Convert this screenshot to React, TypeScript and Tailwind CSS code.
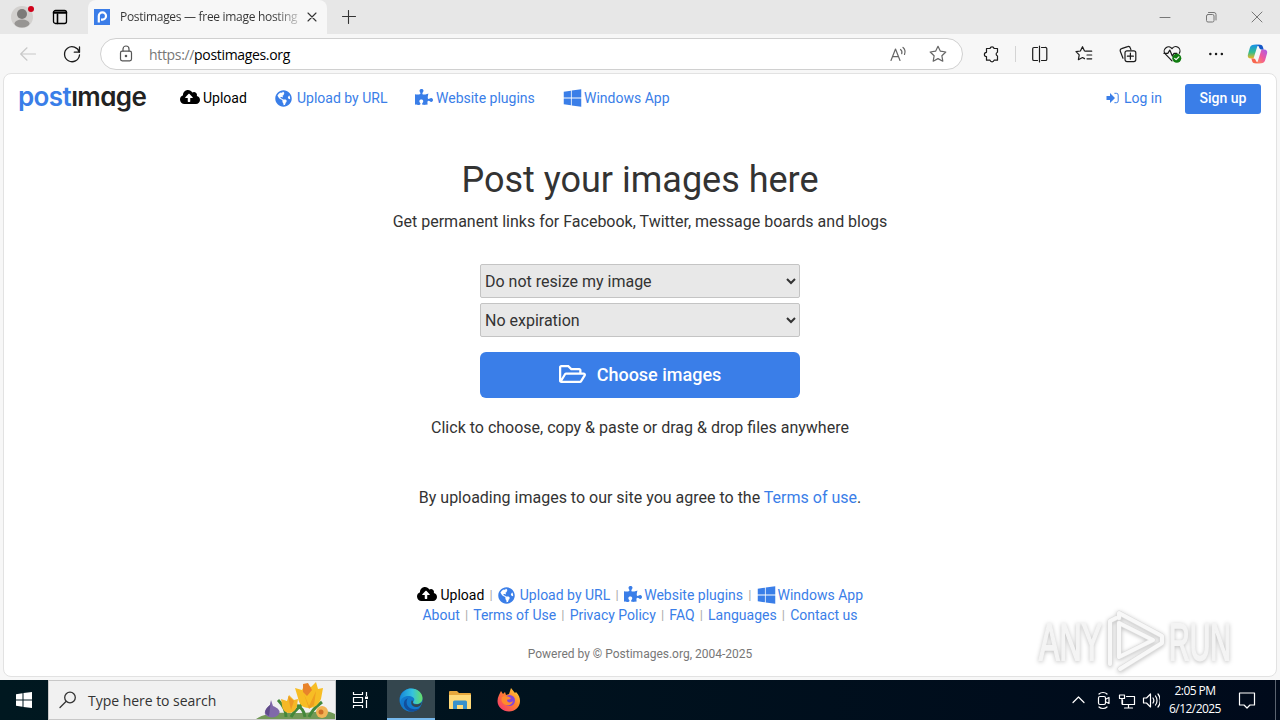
import React, { useState } from "react";
import { FaCloudUploadAlt, FaGlobeAmericas, FaPuzzlePiece, FaWindows, FaRegFolderOpen } from "react-icons/fa";

const line = { fill: "none", stroke: "currentColor", strokeLinecap: "round", strokeLinejoin: "round" } as const;

const LoginIcon = () => (
  <svg className="h-[12px] w-[13px]" viewBox="0 0 13 12" fill="currentColor">
    <path d="M.5 4H4V1.100L9 6l-5 4.900V8H.5z" />
    <path d="M8.400 1.300h2a1.800 1.800 0 0 1 1.800 1.800v5.800a1.800 1.800 0 0 1-1.800 1.800h-2" fill="none" stroke="currentColor" />
  </svg>
);

const TitleBar = () => (
  <div className="flex h-[34px] bg-[#e7e7e7]">
    <div className="flex w-[88px] items-center pl-[10px]">
      <svg className="h-[26px] w-[26px]" viewBox="0 0 26 26">
        <circle cx="12" cy="13" r="11" fill="#d2d0ce" />
        <circle cx="12" cy="10" r="5" fill="#7d7b79" />
        <ellipse cx="12" cy="19.5" rx="7.5" ry="4" fill="#979593" />
        <circle cx="21" cy="5" r="3" fill="#d0021b" />
      </svg>
      <svg className="ml-[16px] h-[16px] w-[16px]" viewBox="0 0 16 16" {...line} strokeWidth="1.3">
        <rect x="1.5" y="1.5" width="13" height="13" rx="2" />
        <path d="M1.5 3.2h13M5.5 5v9.5" strokeWidth="1.6" />
        <path d="M1.5 4.2h13" />
      </svg>
    </div>
    <div className="flex w-[239px] items-center rounded-t-lg bg-[#f7f7f7] pl-[6px]">
      <svg className="h-[16px] w-[16px]" viewBox="0 0 16 16">
        <rect width="16" height="16" fill="#3b7de8" />
        <path d="M4.8 13.5V7a3.6 3.6 0 1 1 3.6 3.6H7" fill="none" stroke="white" strokeWidth="2.2" />
      </svg>
      <div className="ml-[10px] w-[179px] whitespace-nowrap bg-linear-to-r from-[#333] from-85% to-[#ccc] bg-clip-text font-['Open_Sans','Noto_Sans',sans-serif] text-[12px] tracking-[-0.3px] text-transparent">
        Postimages — free image hosting
      </div>
      <svg className="ml-[8px] h-[10px] w-[10px] text-[#333]" viewBox="0 0 10 10" {...line} strokeWidth="1.1">
        <path d="M1 1l8 8M9 1L1 9" />
      </svg>
    </div>
    <div className="flex flex-1 items-center pl-[15px] text-[#333]">
      <svg className="h-[14px] w-[14px]" viewBox="0 0 14 14" {...line} strokeWidth="1.1">
        <path d="M6.500 .5v13M.5 6.500h13" />
      </svg>
    </div>
    <div className="flex items-center text-[#777]">
      <svg className="w-[46px] h-[12px]" viewBox="0 0 46 12" {...line}><path d="M18 6.500h10" /></svg>
      <svg className="w-[46px] h-[12px]" viewBox="0 0 46 12" {...line}>
        <rect x="18.5" y="3.5" width="7.5" height="7.5" rx="1.5" />
        <path d="M20.5 1.5H26a2 2 0 0 1 2 2V9" />
      </svg>
      <svg className="w-[46px] h-[12px]" viewBox="0 0 46 12" {...line}><path d="M18 1l10 10M28 1L18 11" /></svg>
    </div>
  </div>
);

const Tool = ({ children, className = "w-[44px]" }: { children: React.ReactNode; className?: string }) => (
  <div className={`flex shrink-0 justify-center ${className}`}>
    <svg className="h-[20px] w-[20px]" viewBox="0 0 20 20" {...line} strokeWidth="1.2">{children}</svg>
  </div>
);

const star = "M10 2.3l2.4 4.9 5.4.8-3.9 3.8.9 5.4-4.8-2.6-4.8 2.6.9-5.4L2.2 8l5.4-.8z";

const AddressBar = () => (
  <div className="flex h-[40px] items-center bg-[#f7f7f7] text-[#1b1b1b]">
    <Tool className="w-[56px] text-[#c8c8c8]"><path d="M17.5 10H3M9 3.8L2.7 10 9 16.2" /></Tool>
    <Tool className="w-[32px]"><path d="M17.3 8.3A7.5 7.5 0 1 0 17.5 11M17.5 3v5.2h-5.2" strokeWidth="1.3" /></Tool>
    <div className="ml-[12px] flex h-[32px] w-[863px] items-center rounded-full border border-[#d0d0d0] bg-white">
      <Tool className="w-[50px] text-[#555]">
        <rect x="4.5" y="7.2" width="11" height="9.6" rx="1.7" />
        <path d="M7 7V5a3 3 0 0 1 6 0v2" />
        <circle cx="10" cy="12" r=".7" fill="currentColor" />
      </Tool>
      <div className="ml-[-2px] flex-1 font-['Open_Sans','Noto_Sans',sans-serif] text-[14px] tracking-[-0.33px] text-black">
        <span className="text-[#777]">https://</span>postimages.org
      </div>
      <Tool className="mr-[-4px] w-[40px] text-[#666]">
        <path d="M3 16.5L7.5 5 12 16.5M4.6 12.6h5.8M12.5 5.5c1.3 1 1.7 2.6 1.2 4.2M15 3.5c2 1.7 2.5 4.3 1.5 7" />
      </Tool>
      <Tool className="w-[48px] text-[#666]"><path d={star} /></Tool>
    </div>
    <Tool className="w-[56px]">
      <path d="M5.500 4.500H9a2.100 2.100 0 0 1 4.100 0h3.400v3.700a2 2 0 0 0 0 3.800v4.200h-3.400a2.100 2.100 0 0 1-4.100 0H5.500v-3.700a2.100 2.100 0 0 1 0-4.200z" />
    </Tool>
    <div className="ml-[-4px] h-[16px] w-px bg-[#d4d4d4]" />
    <div className="ml-[2px] flex">
      <Tool>
        <path d="M7.500 3.500H4a1.300 1.300 0 0 0-1.300 1.300v10.400a1.300 1.300 0 0 0 1.300 1.300h3.500M11.500 3.500H15a1.300 1.300 0 0 1 1.800 1.300v10.400a1.300 1.300 0 0 1-1.300 1.300h-4M9.500 2v16" />
      </Tool>
      <Tool>
        <path d="M11.5 7.200H17.7M13 11h4.700M13 14.800h4.700M10.500 7L8.500 2.700 6.400 7l-4.400.7 3.200 3.200-.8 4.800L8.500 13.500l2 1.100" />
      </Tool>
      <Tool>
        <rect x="7" y="6.8" width="10.8" height="10.8" rx="2" />
        <path d="M12.4 9.2v6M9.4 12.2h6M5 14.2l-2.700-7a2 2 0 0 1 1.300-2.600l6-2a2 2 0 0 1 2.600 1.200l.7 1.800" />
      </Tool>
      <Tool>
        <path d="M10 16.8L3 9.700a4.200 4.200 0 0 1 7-5 4.200 4.200 0 0 1 7.300 4.600M2 9.400h3.800l2-3.300 2.500 6 1.700-2.800h3" />
        <circle cx="14.8" cy="14.2" r="4.5" fill="#107c10" stroke="none" />
        <path d="M12.700 14.300l1.400 1.400 2.800-2.800" stroke="white" />
      </Tool>
      <Tool><path d="M4.300 10h.1M10 10h.1M15.800 10h.1" strokeWidth="2.400" /></Tool>
    </div>
    <svg className="ml-[8px] h-[22px] w-[23px] shrink-0" viewBox="0 0 24 24">
      <defs>
        <linearGradient id="cop1" x1="0" y1="0" x2="0" y2="1"><stop stopColor="#1692e8" /><stop offset=".55" stopColor="#35bd8d" /><stop offset="1" stopColor="#f5b51d" /></linearGradient>
        <linearGradient id="cop2" x1="1" y1="0" x2="0" y2="1"><stop stopColor="#a75cf0" /><stop offset=".5" stopColor="#f0579b" /><stop offset="1" stopColor="#ff9a45" /></linearGradient>
      </defs>
      <path d="M17 7h2c3 0 4.200 2 3.400 4.500l-2 7C19.700 21 18 22 16 22H9c2 0 3-1 3.600-3l2.800-9c.5-2 .9-3 1.600-3z" fill="url(#cop2)" />
      <path d="M7 17H5c-3 0-4.200-2-3.400-4.500l2-7C4.300 3 6 2 8 2h7c-2 0-3 1-3.600 3l-2.800 9C8 16 7.800 17 7 17z" fill="url(#cop1)" />
      <path d="M8 2h7c2 0 2.500 1 3 2.700L18.700 7H17c-2 0-2.600-.5-3.200-2.200C13.300 3 12 2 8 2z" fill="#1557c8" />
      <path d="M16 22H9c-2 0-2.500-1-3-2.700L5.300 17H7c2 0 2.600.5 3.200 2.200C10.700 21 12 22 16 22z" fill="#f8664f" />
    </svg>
  </div>
);

const Header = () => (
  <div className="flex h-[48px] items-center pl-[14px] pr-[15px] text-[14px] text-[#3a7ee8]">
    <div className="w-[162px] whitespace-nowrap pb-[3px] font-[Inter,sans-serif] text-[26px] font-semibold leading-[40px] tracking-[-0.6px] [font-feature-settings:'cv11']">
      post<span className="text-[#222]">ımage</span>
    </div>
    <a className="flex w-[95px] items-center gap-[3px] text-black"><FaCloudUploadAlt className="mb-[2px] h-[16px] w-[20px]" />Upload</a>
    <a className="flex w-[140px] items-center gap-[5px]"><FaGlobeAmericas className="h-[17px] w-[17px]" />Upload by URL</a>
    <a className="flex w-[148px] items-center gap-[3px]"><FaPuzzlePiece className="mb-[2px] h-[18px] w-[18px]" />Website plugins</a>
    <a className="flex items-center gap-[2px]"><FaWindows className="h-[20px] w-[19px]" />Windows App</a>
    <a className="ml-auto flex items-center gap-[5px]"><LoginIcon />Log in</a>
    <button className="ml-[23px] mt-[2px] h-[30px] w-[76px] rounded-[3px] bg-[#3a7ee8] pb-[2px] font-medium text-white">Sign up</button>
  </div>
);

const Bar = () => <span className="w-[13.5px] text-center text-[13px] text-[#aaa]">|</span>;

const links = ["About", "Terms of Use", "Privacy Policy", "FAQ", "Languages", "Contact us"];

const Footer = () => (
  <div className="mt-[75px] flex flex-col items-center text-[14px] leading-[20px] text-[#3a7ee8]">
    <div className="flex items-center">
      <a className="flex items-center gap-[3.5px] text-black"><FaCloudUploadAlt className="mb-[2px] h-[16px] w-[20px]" />Upload</a>
      <Bar />
      <a className="flex items-center gap-[5px]"><FaGlobeAmericas className="h-[17px] w-[17px]" />Upload by URL</a>
      <Bar />
      <a className="flex items-center gap-[2.5px]"><FaPuzzlePiece className="mb-[2px] h-[18px] w-[18px]" />Website plugins</a>
      <Bar />
      <a className="flex items-center gap-[2px]"><FaWindows className="h-[20px] w-[19px]" />Windows App</a>
    </div>
    <div className="flex items-center">
      {links.map((text, i) => (
        <React.Fragment key={text}>
          {i > 0 && <Bar />}
          <a>{text}</a>
        </React.Fragment>
      ))}
    </div>
    <div className="mt-[19px] text-[12px] text-[#777]">Powered by © Postimages.org, 2004-2025</div>
  </div>
);

const Watermark = () => (
  <svg className="absolute left-[1032px] top-[604px] h-[72px] w-[206px] drop-shadow-[0_1px_2px_rgba(0,0,0,0.25)]" viewBox="0 0 206 72">
    <g fill="#f4f4f4" stroke="#f4f4f4" strokeWidth="1.800" fontFamily="'Liberation Sans Narrow', 'Liberation Sans', sans-serif" fontSize="52">
      <text x="7" y="56" textLength="63" lengthAdjust="spacingAndGlyphs">ANY</text>
      <text x="137" y="56" textLength="62" lengthAdjust="spacingAndGlyphs">RUN</text>
    </g>
    <g fill="none" strokeLinejoin="round" strokeLinecap="round">
      <path d="M87 53V19l34 17zM78 60V17l6-3M87 14V9l43 23v7L88 65" stroke="#ddd" strokeWidth="5" />
      <path d="M87 53V19l34 17zM78 60V17l6-3M87 14V9l43 23v7L88 65" stroke="#f8f8f8" strokeWidth="4" />
    </g>
  </svg>
);

const Taskbar = () => (
  <div className="flex h-[40px] bg-linear-to-r from-[#001820] to-[#000a1b] font-['Open_Sans','Noto_Sans',sans-serif] text-white">
    <div className="flex w-[48px] items-center justify-center">
      <svg className="h-[16px] w-[16px]" viewBox="0 0 16 16" fill="white">
        <path d="M0 2.200l6.500-1v6.300H0zM7.500 1L16 0v7.500H7.500zM0 8.500h6.500v6.300L0 13.800zM7.500 8.500H16V16l-8.500-1z" />
      </svg>
    </div>
    <div className="flex w-[288px] items-center border border-[#c8c8c8] bg-[#f1f1f1] text-[#333]">
      <svg className="ml-[10px] h-[18px] w-[18px]" viewBox="0 0 18 18" {...line} strokeWidth="1.300">
        <circle cx="11" cy="6.500" r="5.300" /><path d="M7 10.500L1 16.500" />
      </svg>
      <span className="ml-[11px] whitespace-nowrap text-[14px] tracking-[-0.030px]">Type here to search</span>
      <svg className="ml-auto h-[38px] w-[79px]" viewBox="0 0 79 38">
        <path d="M0 38c8-6 24-7 40-6s28-5 39 1v5z" fill="#729957" />
        <path d="M30 36c0-8-4-13-8-17M35 36c4-8 8-9 11-13M49 36c-1-7-4-9-8-12M53 36c4-9 8-11 13-15" fill="none" stroke="#43883b" strokeWidth="3" />
        <path d="M15 19l2 6c5 2 8 5 6 8-3 5-12 4-14 0-1-4 3-7 5-9z" fill="#8069aa" />
        <path d="M15 20l-2 15c-6-3-4-7 1-11zM17 25l2 9" fill="#604b8a" />
        <path d="M25 18l6 2 2-6 5 5 4-1-1 7c-1 4-4 7-8 7s-7-4-7-8z" fill="#f5b827" />
        <path d="M32 15l3 14 3-9" fill="#ec9826" />
        <path d="M39 7l7 2 3-6 6 3 5-5 2 7 5-1-2 11c-2 5-6 9-12 9-7 0-10-4-11-10z" fill="#f7bd24" />
        <path d="M47 3l5-1 4 7-5 6-4-4z" fill="#e8832b" />
        <path d="M48 13l5 12 7-15-2 14-5 4z" fill="#ef9f20" />
        <circle cx="66" cy="31" r="6" fill="#f2b456" /><circle cx="65" cy="31" r="2.500" fill="#cf6f27" />
      </svg>
    </div>
    <div className="flex w-[48px] items-center justify-center">
      <svg className="h-[16px] w-[17px]" viewBox="0 0 17 16" {...line} strokeLinecap="butt">
        <path d="M1.500 0v2.500h9V0M1.500 16v-2.500h9V16M1.500 5.500h9v5h-9zM14.500 0v4M14.500 8v8" strokeWidth="1.200" />
        <path d="M13 4.500h3v2.500h-3z" fill="white" stroke="none" />
      </svg>
    </div>
    <div className="ml-[3px] flex w-[48px] items-center justify-center border-b-2 border-[#76b9ed] bg-[#34464e]">
      <svg className="mt-[1px] h-[24px] w-[24px]" viewBox="0 0 24 24">
        <defs>
          <linearGradient id="edge1"><stop stopColor="#1688d9" /><stop offset=".55" stopColor="#35c2df" /><stop offset="1" stopColor="#65df67" /></linearGradient>
        </defs>
        <circle cx="12" cy="12" r="11.500" fill="#1279cc" />
        <path d="M1 10C3 3 8 .5 12 .5c7 0 11.500 5 11.500 9.500 0 4-3 6-6 6-2.500 0-4-1-3-2.500 2.500-3-1-5.500-5-5.500C5 8 2 10 1 15z" fill="url(#edge1)" />
        <path d="M9 10c-3 4-1 10 5 11 3 .7 6 0 8-2-3 4-7 5-10 4.500C6 22 3 17 6 12z" fill="#124f9c" />
        <path d="M14 13.500c-1 2 1 3 3.500 2.800 2 0 4-.7 5.500-2.300-.5 3-3 5-6 5-4 0-6-4-4-7z" fill="#34464e" />
      </svg>
    </div>
    <div className="flex w-[49px] items-center justify-center">
      <svg className="h-[20px] w-[22px]" viewBox="0 0 22 20">
        <path d="M0 2q0-1 1-1h7l2 2h11q1 0 1 1v14q0 1-1 1H1q-1 0-1-1z" fill="#e7a83c" />
        <path d="M0 5h22v13q0 1-1 1H1q-1 0-1-1z" fill="#ffda79" />
        <path d="M4 19v-7q0-1.500 1.500-1.500h11q1.500 0 1.500 1.500v7h-4v-4H8v4z" fill="#3991cb" />
      </svg>
    </div>
    <div className="flex w-[50px] items-center justify-center">
      <svg className="h-[24px] w-[24px]" viewBox="0 0 24 24">
        <defs><linearGradient id="fox" x1="1" y1="0" x2="0" y2="1"><stop stopColor="#ffe13a" /><stop offset=".45" stopColor="#ff812e" /><stop offset="1" stopColor="#f52d79" /></linearGradient></defs>
        <path d="M2 7l2-4 2 3 2-2 1 3 3-1 2-6 4 5 1-1c3 3 4 6 4 9 0 6-5 10.500-11 10.500S.5 19 .5 13c0-2 .5-4 1.500-6z" fill="url(#fox)" />
        <circle cx="12.500" cy="12.500" r="5.500" fill="#8246d9" />
        <path d="M5 9c3-2 6-1 9 1-1 2-3 1-4 2 0 3 4 3 6 1-1 5-8 6-11 1-1-2-.5-4 0-5z" fill="#ff8b2d" />
      </svg>
    </div>
    <div className="ml-auto flex items-center">
      <svg className="h-[20px] w-[100px]" viewBox="0 0 100 20" {...line} strokeWidth="1.200">
        <path d="M13 12.500L18.500 7l5.500 5.500" />
        <rect x="38.500" y="6.500" width="7" height="8" rx="1.500" /><path d="M46 9l3-1.500v6L46 12M39 4c2-2 6-2 8 0M39 17c2 2 6 2 8 0" />
        <path d="M66.500 6.500H74.500V14.500H62.500V10M68.500 15v3M64.500 18h8M59.500 5h5v3.500h-5zM62 8.500V14" />
        <path d="M83.500 8h3l4-4v13l-4-4h-3zM93 8c1 1.500 1 3.500 0 5M95.500 6c2 2.500 2 6.500 0 9M98 4c3 3.500 3 9.500 0 13" />
      </svg>
      <div className="ml-[2px] w-[66px] text-center text-[12px] leading-[18px] tracking-[-0.550px]">
        <div>2:05 PM</div>
        <div>6/12/2025</div>
      </div>
      <svg className="ml-[10px] h-[18px] w-[18px]" viewBox="0 0 18 18" {...line} strokeWidth="1.200">
        <path d="M1.500 2h15v12H12l-3 3-3-3H1.500z" />
      </svg>
      <div className="ml-[19px] h-[40px] w-[5px] border-l border-[#5a6370]" />
    </div>
  </div>
);

export default function App() {
  const [size, setSize] = useState("0");
  const [expire, setExpire] = useState("0");
  const select = "h-[34px] w-full rounded-[2px] border border-[#c4c4c4] bg-[#e8e8e8] text-[16px] text-[#333]";

  return (
    <div className="relative flex h-[720px] w-[1280px] flex-col overflow-hidden bg-[#f7f7f7]">
      <TitleBar />
      <AddressBar />
      <div className="mx-[3px] mb-[3px] mt-[-1px] flex flex-1 flex-col rounded-lg border border-[#e2e2e2] bg-white font-[Roboto,sans-serif] text-[16px] text-[#333]">
        <Header />
        <div className="flex flex-col items-center">
          <h1 className="mt-[36px] text-[36px] leading-[44px]">Post your images here</h1>
          <p className="mt-[8px] leading-[24px]">Get permanent links for Facebook, Twitter, message boards and blogs</p>
          <div className="mt-[30px] flex w-[320px] flex-col gap-[5px]">
            <select className={select} value={size} onChange={(e) => setSize(e.target.value)}>
              <option value="0">Do not resize my image</option>
            </select>
            <select className={select} value={expire} onChange={(e) => setExpire(e.target.value)}>
              <option value="0">No expiration</option>
            </select>
            <button className="mt-[10px] flex h-[46px] items-center justify-center gap-[11px] rounded-[6px] bg-[#3a7ee8] pb-[2px] text-[18px] font-medium text-white">
              <FaRegFolderOpen className="h-[24px] w-[27px]" />
              Choose images
            </button>
          </div>
          <p className="mt-[18px] leading-[24px]">Click to choose, copy &amp; paste or drag &amp; drop files anywhere</p>
          <p className="mt-[46px] leading-[24px]">
            By uploading images to our site you agree to the <a className="text-[#3a7ee8]">Terms of use</a>.
          </p>
        </div>
        <Footer />
      </div>
      <Taskbar />
      <Watermark />
    </div>
  );
}
